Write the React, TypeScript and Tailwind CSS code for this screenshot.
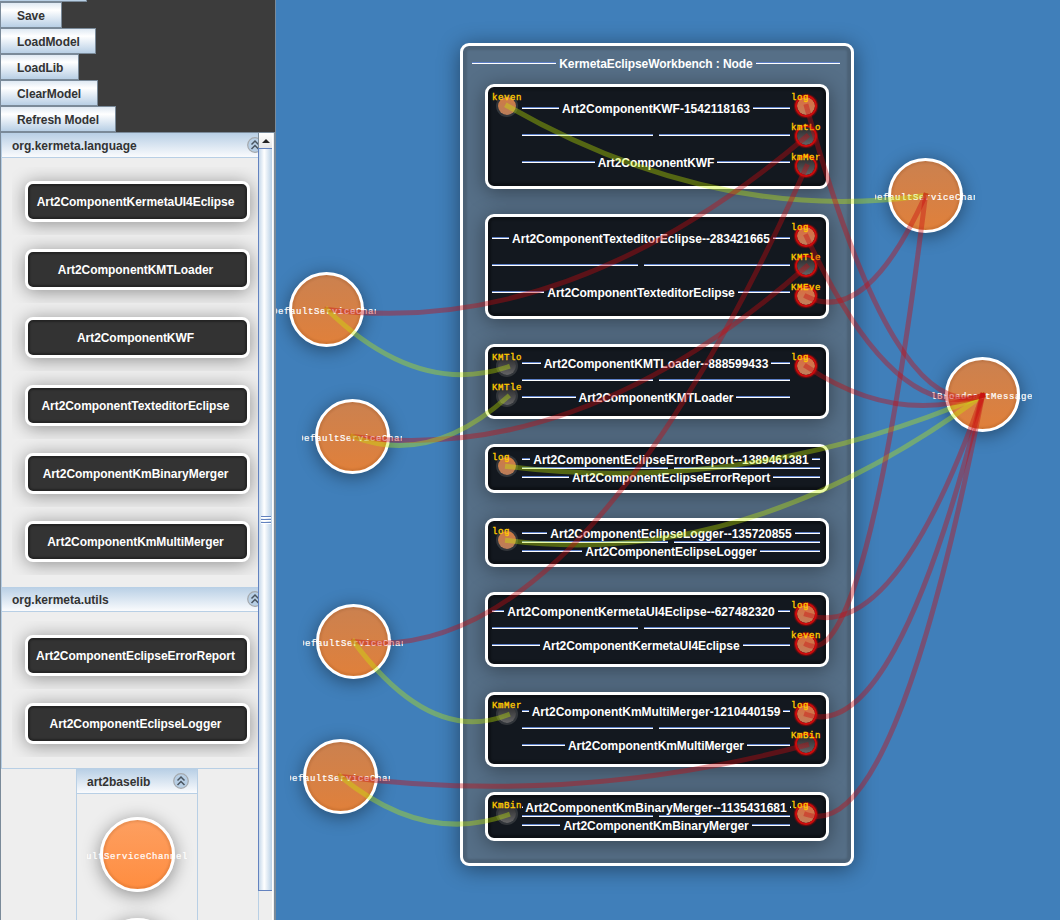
import React from "react";

type Port = { label: string; on: boolean };
type Comp = { id: string; type: string; left: Port[]; right: Port[] };

const LOG: Port = { label: "log", on: true };

const COMPONENTS: Comp[] = [
  { id: "Art2ComponentKWF-1542118163", type: "Art2ComponentKWF", left: [{ label: "keven", on: true }], right: [LOG, { label: "kmtLo", on: false }, { label: "kmMer", on: false }] },
  { id: "Art2ComponentTexteditorEclipse--283421665", type: "Art2ComponentTexteditorEclipse", left: [], right: [LOG, { label: "KMTle", on: false }, { label: "KMEve", on: true }] },
  { id: "Art2ComponentKMTLoader--888599433", type: "Art2ComponentKMTLoader", left: [{ label: "KMTlo", on: false }, { label: "KMTle", on: false }], right: [LOG] },
  { id: "Art2ComponentEclipseErrorReport--1389461381", type: "Art2ComponentEclipseErrorReport", left: [LOG], right: [] },
  { id: "Art2ComponentEclipseLogger--135720855", type: "Art2ComponentEclipseLogger", left: [LOG], right: [] },
  { id: "Art2ComponentKermetaUI4Eclipse--627482320", type: "Art2ComponentKermetaUI4Eclipse", left: [], right: [LOG, { label: "keven", on: true }] },
  { id: "Art2ComponentKmMultiMerger-1210440159", type: "Art2ComponentKmMultiMerger", left: [{ label: "KmMer", on: false }], right: [LOG, { label: "KmBin", on: false }] },
  { id: "Art2ComponentKmBinaryMerger--1135431681", type: "Art2ComponentKmBinaryMerger", left: [{ label: "KmBin", on: false }], right: [LOG] },
];

const LAYOUT: Record<number, { box: string; rows: string }> = {
  3: { box: "h-[105px]", rows: "pt-[16px] auto-rows-[27px]" },
  2: { box: "h-[75px]", rows: "pt-[11px] auto-rows-[17px]" },
  1: { box: "h-[49px]", rows: "pt-[7px] auto-rows-[9px]" },
};

const CHANNELS = [
  { name: "DefaultServiceChan", pos: "left-[0px] top-[259px]" },
  { name: "DefaultServiceChan", pos: "left-[26px] top-[386px]" },
  { name: "DefaultServiceChan", pos: "left-[27px] top-[591px]" },
  { name: "DefaultServiceChan", pos: "left-[14px] top-[726px]" },
  { name: "DefaultServiceChan", pos: "left-[599px] top-[145px]" },
  { name: "lBroadcastMessage", pos: "left-[656px] top-[344px]" },
];

type Wire = { ends: [number, number, number, number]; provided?: boolean };

const WIRES: Wire[] = [
  { ends: [507.5, 106, 925.5, 195.5], provided: true },
  { ends: [507.5, 466.5, 982.5, 395.5], provided: true },
  { ends: [507.5, 540.5, 982.5, 395.5], provided: true },
  { ends: [327, 309.5, 806.5, 136.5] },
  { ends: [352.5, 436.5, 806.5, 266.5] },
  { ends: [353.5, 641.5, 806.5, 166.5] },
  { ends: [340.5, 776.5, 806.5, 745] },
  { ends: [806.5, 296.5, 925.5, 195.5] },
  { ends: [806.5, 644.5, 925.5, 195.5] },
  { ends: [806.5, 106.5, 982.5, 395.5] },
  { ends: [806.5, 236.5, 982.5, 395.5] },
  { ends: [806.5, 366.5, 982.5, 395.5] },
  { ends: [806.5, 614.5, 982.5, 395.5] },
  { ends: [806.5, 714.5, 982.5, 395.5] },
  { ends: [806.5, 814.5, 982.5, 395.5] },
  { ends: [327, 309.5, 507.5, 367], provided: true },
  { ends: [352.5, 436.5, 507.5, 397], provided: true },
  { ends: [353.5, 641.5, 507.5, 715], provided: true },
  { ends: [340.5, 776.5, 507.5, 815], provided: true },
];

// Hanging wire: control point sits 30px below the lower end.
const wirePath = ([x1, y1, x2, y2]: Wire["ends"]) =>
  `M${x1} ${y1}Q${(x1 + x2) / 2} ${Math.max(y1, y2) + 30} ${x2} ${y2}`;

function Rule() {
  return <span className="h-[2px] min-w-0 flex-1 border-t border-[#5c7fc6] bg-white" />;
}

function Titled({ text, tight = false }: { text: string; tight?: boolean }) {
  return (
    <div className={`flex h-[2px] items-center gap-[3px] text-[12px] leading-[14px] font-bold whitespace-nowrap text-white ${tight ? "tracking-[-0.08px]" : ""}`}>
      <Rule />
      {text ? <span className="pt-[2px]">{text}</span> : <span />}
      <Rule />
    </div>
  );
}

function PortDot({ port, required }: { port: Port; required: boolean }) {
  const ring = required
    ? "border-[#cf0b0b] shadow-[0_0_1px_1px_rgba(190,0,0,0.55)]"
    : "border-[#8a8a8a]/25";
  const fill = port.on
    ? required
      ? "bg-linear-to-b from-[#dc6a3c] to-[#c07f5c]"
      : "bg-linear-to-b from-[#d07b42] to-[#b97d5a]"
    : "bg-linear-to-b from-[#2a2a2c] to-[#646466]";
  return (
    <div className="relative flex size-[30px] items-center justify-center">
      <span className={`size-[22px] rounded-full border-[2px] bg-clip-padding ${ring} ${fill}`} />
      <span className="absolute top-[2px] left-0 font-['Liberation_Mono',monospace] text-[9px] leading-[10px] tracking-[0.6px] whitespace-nowrap text-[#ffc800] [-webkit-text-stroke:0.35px_#ffc800]">
        {port.label}
      </span>
    </div>
  );
}

function ComponentBox({ comp }: { comp: Comp }) {
  const size = LAYOUT[Math.max(comp.left.length, comp.right.length)];
  return (
    <div className={`flex w-[344px] rounded-[9px] border-[3px] border-white bg-[#13181f] pt-[4px] pr-[5px] pl-[4px] shadow-[0_3px_20px_rgba(0,0,0,0.4),inset_0_0_2px_3px_rgba(0,0,0,0.3)] ${size.box}`}>
      {comp.left.length > 0 && (
        <div className="w-[30px] shrink-0">
          {comp.left.map((p, i) => <PortDot key={i} port={p} required={false} />)}
        </div>
      )}
      <div className={`grid min-w-0 flex-1 content-start pr-px ${size.rows}`}>
        <Titled text={comp.id} />
        <Titled text="" />
        <Titled text={comp.type} tight />
      </div>
      {comp.right.length > 0 && (
        <div className="w-[30px] shrink-0">
          {comp.right.map((p, i) => <PortDot key={i} port={p} required />)}
        </div>
      )}
    </div>
  );
}

function Channel({ name, fill, start }: { name: string; fill: string; start: string }) {
  return (
    <div className="relative flex size-[101px] items-center justify-center">
      <span className={`size-[75px] rounded-full border-[3px] border-white bg-linear-to-b shadow-[0_3px_18px_rgba(0,0,0,0.42),inset_0_0_2px_2px_rgba(90,40,0,0.12)] ${fill}`} />
      <div className="absolute top-[47px] left-0 h-[12px] w-[100px] overflow-hidden">
        <div className={`font-['Liberation_Mono',monospace] text-[9px] leading-[12px] tracking-[0.6px] whitespace-nowrap text-white [-webkit-text-stroke:0.2px_#fff] ${start}`}>{name}</div>
      </div>
    </div>
  );
}

function Collapse() {
  return (
    <svg className="size-[16px] shrink-0" viewBox="0 0 16 16" fill="none">
      <circle cx="8" cy="8" r="7.3" fill="#b8cfe5" stroke="#a5a9ad" strokeWidth="1.2" />
      <path d="M4.5 7.5L8 4L11.5 7.5M4.5 12L8 8.5L11.5 12" stroke="#4a5560" strokeWidth="1.5" />
    </svg>
  );
}

function PanelHeader({ title }: { title: string }) {
  return (
    <div className="flex h-[25px] items-center justify-between border-b border-[#b8cfe5] bg-linear-to-b from-[#b8cfe5] to-[#fafbfd] pr-[8px] pl-[10px] text-[12px] font-bold text-[#333]">
      <span className="pt-[2px]">{title}</span>
      <Collapse />
    </div>
  );
}

function PaletteItem({ name }: { name: string }) {
  return (
    <div className="flex h-[68px] w-[250px] items-start overflow-hidden pt-[14px] pl-[13px]">
      <div className="flex h-[41px] w-[225px] items-center justify-center rounded-[8px] border-[3px] border-white bg-[#333] pr-[4px] text-[12px] font-bold tracking-[-0.06px] whitespace-nowrap text-white shadow-[0_2px_18px_rgba(0,0,0,0.4),inset_0_0_2px_2px_rgba(0,0,0,0.3)]">
        {name}
      </div>
    </div>
  );
}

function ToolButton({ label, width }: { label: string; width: string }) {
  return (
    <button className={`h-[26px] shrink-0 border border-[#7a8a99] bg-linear-to-b from-[#dfe9f3] via-white via-30% to-[#b8cfe5] pt-[2px] pl-[16px] text-left text-[12px] leading-[22px] font-bold tracking-[-0.06px] whitespace-nowrap text-[#333] ${width}`}>
      {label}
    </button>
  );
}

function ScrollBar() {
  return (
    <div className="flex w-[15px] shrink-0 flex-col border-r border-white bg-[#eee]">
      <div className="flex h-[15px] items-center justify-center border-l border-[#7a8a99] bg-linear-to-b from-white to-[#e6e6e6]">
        <svg className="h-[4px] w-[8px]" viewBox="0 0 8 4"><path d="M0 4L4 0L8 4Z" fill="#222" /></svg>
      </div>
      <div className="flex h-[743px] flex-col items-center justify-center gap-[1px] border border-r-0 border-[#6382bf] bg-linear-to-r from-[#c6d8ea] via-white via-40% to-[#b8cfe5]">
        <span className="h-[2px] w-[10px] border-t border-[#6382bf] bg-white" />
        <span className="h-[2px] w-[10px] border-t border-[#6382bf] bg-white" />
        <span className="h-[2px] w-[10px] border-t border-[#6382bf] bg-white" />
      </div>
      <div className="flex-1 border-l border-[#b8cfe5]" />
    </div>
  );
}

function Sidebar() {
  return (
    <aside className="flex w-[276px] shrink-0 flex-col overflow-hidden border-r border-[#7a8a99] bg-[#3c3c3c]">
      <div className="flex flex-col items-start">
        <div className="h-[2px] w-[87px] border-r border-b border-[#7a8a99] bg-[#b8cfe5]" />
        <ToolButton label="Save" width="w-[62px]" />
        <ToolButton label="LoadModel" width="w-[96px]" />
        <ToolButton label="LoadLib" width="w-[79px]" />
        <ToolButton label="ClearModel" width="w-[98px]" />
        <ToolButton label="Refresh Model" width="w-[116px]" />
      </div>
      <div className="flex min-h-0 flex-1 border-x border-t border-[#7a8a99] bg-[#eee]">
        <div className="flex w-[257px] shrink-0 flex-col overflow-hidden">
          <section className="h-[454px] w-[270px] shrink-0 border-l border-[#b8cfe5]">
            <PanelHeader title="org.kermeta.language" />
            <div className="pt-[9px] pl-[10px]">
              <PaletteItem name="Art2ComponentKermetaUI4Eclipse" />
              <PaletteItem name="Art2ComponentKMTLoader" />
              <PaletteItem name="Art2ComponentKWF" />
              <PaletteItem name="Art2ComponentTexteditorEclipse" />
              <PaletteItem name="Art2ComponentKmBinaryMerger" />
              <PaletteItem name="Art2ComponentKmMultiMerger" />
            </div>
          </section>
          <section className="h-[182px] w-[270px] shrink-0 border-b border-l border-[#b8cfe5]">
            <PanelHeader title="org.kermeta.utils" />
            <div className="pt-[9px] pl-[10px]">
              <PaletteItem name="Art2ComponentEclipseErrorReport" />
              <PaletteItem name="Art2ComponentEclipseLogger" />
            </div>
          </section>
          <section className="ml-[75px] w-[122px] flex-1 border-x border-[#b8cfe5]">
            <PanelHeader title="art2baselib" />
            <div className="pt-[10px] pl-[10px]">
              <Channel name="ultServiceChannel" fill="from-[#fd9f60] to-[#ff8d3f]" start="-ml-[1px]" />
              <Channel name="" fill="from-[#fd9f60] to-[#ff8d3f]" start="ml-0" />
            </div>
          </section>
        </div>
        <ScrollBar />
      </div>
    </aside>
  );
}

export default function App() {
  return (
    <div className="flex h-[920px] w-[1060px] overflow-hidden font-['Liberation_Sans',Arial,sans-serif]">
      <Sidebar />
      <main className="relative min-w-0 flex-1 overflow-hidden bg-[#407fba]">
        <div className="absolute top-[43px] left-[184px] h-[823px] w-[394px] rounded-[9px] border-[3px] border-white bg-[#566f87] px-[9px] pt-[16px] shadow-[0_3px_22px_rgba(0,0,0,0.45),inset_0_0_2px_4px_rgba(0,0,0,0.12)]">
          <div className="pr-[2px]">
            <Titled text="KermetaEclipseWorkbench : Node" tight />
          </div>
          <div className="flex flex-col gap-[25px] pt-[20px] pl-[13px]">
            {COMPONENTS.map((c) => <ComponentBox key={c.id} comp={c} />)}
          </div>
        </div>
        {CHANNELS.map((c, i) => (
          <div key={i} className={`absolute ${c.pos}`}>
            <Channel name={c.name} fill="from-[#cb814f] to-[#e0803a]" start={c.name.startsWith("D") ? "-ml-[4px]" : "-ml-[1px]"} />
          </div>
        ))}
        <svg className="pointer-events-none absolute inset-0 h-full w-full" viewBox="276 0 784 920" fill="none" strokeWidth="5" strokeLinecap="square">
          {WIRES.map((w, i) => (
            <path
              key={i}
              d={wirePath(w.ends)}
              stroke={w.provided ? "#c8f000" : "#c80a0e"}
              strokeOpacity={w.provided ? 0.36 : 0.4}
            />
          ))}
        </svg>
      </main>
    </div>
  );
}
